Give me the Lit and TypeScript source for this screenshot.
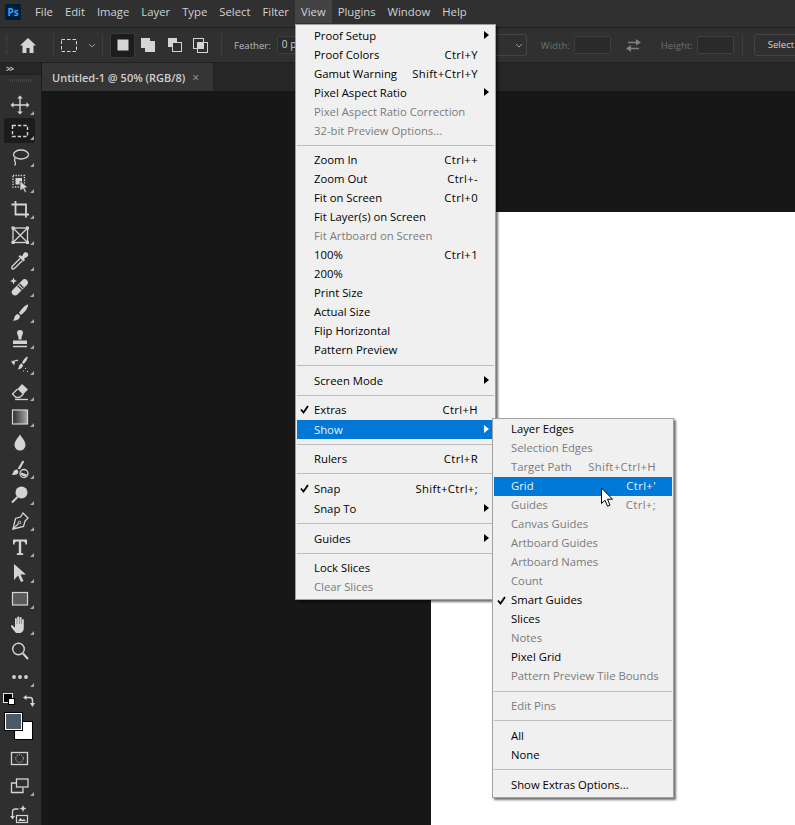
import { LitElement, html, css, svg } from "lit";
import { customElement } from "lit/decorators.js";

type Item = { l?: string; s?: string; a?: boolean; c?: boolean; d?: boolean; h?: boolean; sep?: number; gap?: number };

const I = (l: string, o: Partial<Item> = {}): Item => ({ l, ...o });
const S = (sep = 10): Item => ({ sep });

const viewMenu: Item[] = [
  I("Proof Setup", { a: true }), I("Proof Colors", { s: "Ctrl+Y" }), I("Gamut Warning", { s: "Shift+Ctrl+Y" }),
  I("Pixel Aspect Ratio", { a: true }), I("Pixel Aspect Ratio Correction", { d: true }), I("32-bit Preview Options...", { d: true }),
  S(),
  I("Zoom In", { s: "Ctrl++" }), I("Zoom Out", { s: "Ctrl+-" }), I("Fit on Screen", { s: "Ctrl+0" }), I("Fit Layer(s) on Screen"),
  I("Fit Artboard on Screen", { d: true }), I("100%", { s: "Ctrl+1" }), I("200%"), I("Print Size"), I("Actual Size"),
  I("Flip Horizontal"), I("Pattern Preview"),
  S(12),
  I("Screen Mode", { a: true }),
  S(),
  I("Extras", { c: true, s: "Ctrl+H" }), I("Show", { h: true, a: true, gap: 1 }),
  S(),
  I("Rulers", { s: "Ctrl+R" }),
  S(11),
  I("Snap", { c: true, s: "Shift+Ctrl+;" }), I("Snap To", { a: true, gap: 1 }),
  S(11),
  I("Guides", { a: true }),
  S(),
  I("Lock Slices"), I("Clear Slices", { d: true }),
];

const showMenu: Item[] = [
  I("Layer Edges"), I("Selection Edges", { d: true }), I("Target Path", { d: true, s: "Shift+Ctrl+H" }),
  I("Grid", { h: true, s: "Ctrl+'" }), I("Guides", { d: true, s: "Ctrl+;" }), I("Canvas Guides", { d: true }),
  I("Artboard Guides", { d: true }), I("Artboard Names", { d: true }), I("Count", { d: true }),
  I("Smart Guides", { c: true }), I("Slices"), I("Notes", { d: true }), I("Pixel Grid"),
  I("Pattern Preview Tile Bounds", { d: true }),
  S(),
  I("Edit Pins", { d: true }),
  S(11),
  I("All"), I("None"),
  S(11),
  I("Show Extras Options..."),
];

const menuNames = ["File", "Edit", "Image", "Layer", "Type", "Select", "Filter", "View", "Plugins", "Window", "Help"];

const tools: { i: unknown; t?: boolean; sel?: boolean }[] = [
  { t: true, i: svg`<path d="M10 2.500v15M2.500 10h15" stroke-width="1.400"/><path class="f" stroke="none" d="M10 .5l2.800 3h-5.600zM10 19.500l2.800-3h-5.600zM.5 10l3-2.800v5.600zM19.500 10l-3-2.800v5.600z"/>` },
  { t: true, sel: true, i: svg`<rect x="2.500" y="4.500" width="15" height="11" stroke-width="1.400" stroke-dasharray="3.400 2"/>` },
  { t: true, i: svg`<ellipse cx="11" cy="7.500" rx="7.500" ry="4.500" stroke-width="1.300"/><path d="M5 11c-1 2 0 3.500 .5 5.500c.2 1-.5 1.500-1 2" stroke-width="1.300"/>` },
  { t: true, i: svg`<rect x="3" y="2.500" width="11.500" height="11.500" stroke-width="1.300" stroke-dasharray="1.300 1.300"/><rect class="f" x="5.500" y="5" width="6.500" height="6.500" stroke="none"/><path class="f" d="M10 8l8 6.500-3.300.4 1.800 3.800-1.800.8-1.700-3.800-3 2.300z" stroke="#2f2f2f" stroke-width=".7"/>` },
  { t: true, i: svg`<path d="M1.500 5.500h14.500v13M5.500 2v13.500H19" stroke-width="1.800"/>` },
  { t: true, i: svg`<rect x="3" y="3" width="14.500" height="14.500" stroke-width="1.300"/><path d="M3 3l14.500 14.500M17.500 3L3 17.500" stroke-width="1.300"/><path class="f" d="M1.500 1.500h3v3h-3zM16 1.500h3v3h-3zM1.500 16h3v3h-3zM16 16h3v3h-3z" stroke="none"/>` },
  { t: true, i: svg`<path class="f" d="M12 5.500l1.500-3c1-1.500 3-1.500 4-.5s1 3-.5 4l-3 1.500 1 1.500-1.500 1.500-5-5 1.500-1.500z" stroke="none"/><path d="M10 7.500l-7 7c-1 1-1.500 2.500-1 3.200s2.200 0 3.200-1l7-7" stroke-width="1.300"/>` },
  { t: true, i: svg`<path class="f" d="M3 12.500l9-9c1.800-1.800 3.500-1.800 5-.3s1.500 3.200-.3 5l-9 9c-1.800 1.800-3.500 1.800-5 .3s-1.500-3.200 .3-5z" stroke="none"/><path class="k" d="M7.500 8.500l4.500 4.500M9.500 7l4 4" stroke-width="1.200"/><path class="f" d="M3.500 .5l1 2.500 2.500 1-2.500 1-1 2.500-1-2.500-2.500-1 2.500-1z" stroke="none"/>` },
  { t: true, i: svg`<path class="f" d="M18 1.500c.5 3-3 7.500-7 10.500l-2-2c2.500-4 6-8 9-8.500zM8 11l2 2c0 3-3 5-7.500 4.500c2-1 1.500-2 2-3.500s2-3 3.500-3z" stroke="none"/>` },
  { t: true, i: svg`<path class="f" d="M10 1c2 0 3 1.200 3 2.800c0 2-1.500 3-1.500 5.200v1.500h-3V9c0-2.200-1.500-3.200-1.500-5.200C7 2.200 8 1 10 1zM3 11.500h14v3.500H3z" stroke="none"/><path d="M3 17.500h14" stroke-width="1.500"/>` },
  { t: true, i: svg`<path class="f" d="M17.500 1.500c.8 2-2 6-4 7.500l-1.500-1.500c1.500-2.500 3.500-5.500 5.500-6zM11.500 8.500l1.500 1.500c-.2 2.500-2.500 4.500-5.500 4.200c1.500-.7 1-2 1.800-3.500c.4-1 1.200-2 2.200-2.200z" stroke="none"/><path d="M2 8c1.500-2 3.500-3 6-2.500" stroke-width="1.300"/><path class="f" d="M1 5.500l3 5 1.200-3.500zM15 13h1v1h-1zM13 15.500h1v1h-1zM17 16h1v1h-1z" stroke="none"/>` },
  { t: true, i: svg`<path class="f" d="M12 3l6 5.500-5 5-5.500-5.500z" stroke="none"/><path d="M7.500 8l-5 5 3.500 3.500h3.500l4-3.500" stroke-width="1.300"/><path d="M5 18.500h13" stroke-width="1.300"/>` },
  { t: true, i: svg`<defs><linearGradient id="g1"><stop offset="0" stop-color="#2c2c2c"/><stop offset="1" stop-color="#a8a8a8"/></linearGradient></defs><rect x="2.500" y="3" width="15" height="14" fill="url(#g1)" stroke-width="1.200"/>` },
  { i: svg`<path class="f" d="M10 1.500c2 3.500 5.500 6.500 5.500 10.500a5.500 5.500 0 0 1-11 0c0-4 3.500-7 5.500-10.500z" stroke="none"/>` },
  { t: true, i: svg`<path class="f" d="M12.500 1.500l1.800 1-4.500 8-2-1zM7 10.500c-.5 0-3 .5-3.500 2s-1 2.500-2 3c2 .7 5.500.7 6.500-1.500c.5-1 .5-2.500-1-3.500z" stroke="none"/><circle cx="14" cy="14.500" r="4" stroke-width="1.300"/><path class="f" d="M11 13.500l6 2-1 2.500-5-2z" stroke="none"/>` },
  { t: true, i: svg`<circle class="f" cx="11.500" cy="7.500" r="6" stroke="none"/><path d="M7.500 12L2 17.500" stroke-width="2"/>` },
  { t: true, i: svg`<path d="M13 2l5 5-3 3-1.500 5.500L3 18l2.500-10.500L10.500 6z" stroke-width="1.300"/><path d="M3 18l5.500-5.500" stroke-width="1.100"/><circle cx="9.500" cy="11.500" r="1.300" stroke-width="1"/>` },
  { t: true, i: svg`<path class="f" d="M3 2.500h14v5h-1.400c-.3-2-1-3-2.600-3h-1.800v11.500l2 .5V18H6.800v-1.500l2-.5V4.500H7c-1.600 0-2.300 1-2.600 3H3z" stroke="none"/>` },
  { t: true, i: svg`<path class="f" d="M4 1l12 10.500h-5.500l3 6.500-2.500 1-3-6.500L4 17z" stroke="none"/>` },
  { t: true, i: svg`<rect x="2.500" y="3.500" width="15" height="12.500" stroke-width="1.200" fill="#5a5a5a"/>` },
  { t: true, i: svg`<path class="f" d="M6 18c-1.500-2-4-4.500-5-6.500c-.4-1 1-1.700 2-.7l2 2V4c0-1.200 1.800-1.200 1.800 0v5h.4V2.500c0-1.300 2-1.300 2 0V9h.4V3c0-1.300 2-1.300 2 0v6h.4V5c0-1.200 1.800-1.200 1.800 0v8c0 2.500-1.500 5-4 5z" stroke="none"/>` },
  { i: svg`<circle cx="8.500" cy="8" r="5.800" stroke-width="1.400"/><path d="M13 12.500l5 5.500" stroke-width="2"/>` },
  { t: true, i: svg`<circle class="f" cx="4" cy="10" r="1.900" stroke="none"/><circle class="f" cx="10" cy="10" r="1.900" stroke="none"/><circle class="f" cx="16" cy="10" r="1.900" stroke="none"/>` },
];

@customElement("app-root")
export class AppRoot extends LitElement {
  static styles = css`
    :host { display: block; position: relative; width: 795px; height: 825px; overflow: hidden; background: #2b2b2b;
      font-family: "Open Sans", "Noto Sans", sans-serif; font-size: 11.3px; color: #cfcfcf; }
    svg { display: block; fill: none; stroke: #d4d4d4; }
    svg .f { fill: #d4d4d4; }
    svg .k { stroke: #2f2f2f; }

    .menubar { height: 28px; display: flex; align-items: stretch; background: #303030; box-sizing: border-box; border-bottom: 1px solid #1f1f1f; padding-left: 5px; }
    .ps { width: 16px; height: 16px; margin: 4px 8px 0 0; background: #001e36; border-radius: 2px; color: #31a8ff; font: 700 10px/16px "Open Sans", sans-serif; text-align: center; }
    .mi { padding: 3px 6px 0; height: 20px; line-height: 18px; color: #d2d2d2; font-size: 11.3px; }
    .mi.on { background: #434343; height: 20px; }

    .options { height: 35px; box-sizing: border-box; display: flex; align-items: center; background: #303030; border-bottom: 1px solid #1f1f1f; overflow: hidden; }
    .options > * { flex: none; }
    .grip { width: 3px; height: 20px; margin-left: 5px; background: repeating-linear-gradient(#3d3d3d 0 1px, transparent 1px 2px); }
    .home { margin-left: 12px; }
    .div { width: 1px; height: 22px; background: #3f3f3f; }
    .shape { width: 25px; height: 25px; border-radius: 2px; display: flex; align-items: center; justify-content: center; margin-right: 1px; }
    .shape.on { background: #1c1c1c; border: 1px solid #3a3a3a; box-sizing: border-box; }
    .lbl { color: #b9b9b9; font-size: 9.6px; }
    .lbl.dim { color: #6f6f6f; }
    .field { height: 18px; box-sizing: border-box; border: 1px solid #3f3f3f; background: #2a2a2a; border-radius: 2px; color: #cfcfcf; font-size: 10px; line-height: 15px; padding-left: 4px; }
    .stylebox { width: 31px; height: 22px; border: 1px solid #454545; border-left: 0; box-sizing: border-box; border-radius: 0 3px 3px 0; display: flex; align-items: center; justify-content: flex-end; padding-right: 3px; }
    .selectbtn { width: 50px; height: 22px; box-sizing: border-box; border: 1px solid #454545; border-radius: 3px; padding-left: 13px; line-height: 19px; color: #d2d2d2; font-size: 9.6px; white-space: nowrap; overflow: hidden; }
    .ml4 { margin-left: 4px; } .ml6 { margin-left: 6px; } .ml7 { margin-left: 7px; } .ml8 { margin-left: 8px; } .ml10 { margin-left: 10px; } .ml11 { margin-left: 11px; } .ml12 { margin-left: 12px; } .ml14 { margin-left: 14px; } .ml17 { margin-left: 17px; } .ml19 { margin-left: 19px; }
    .w60 { width: 60px; } .w37 { width: 37px; }
    .behind { width: 159px; }

    .work { display: flex; height: 762px; }
    .tools { width: 42px; flex: none; box-sizing: border-box; border-right: 1px solid #1c1c1c; background: #2f2f2f; display: flex; flex-direction: column; overflow: hidden; }
    .tools-head { height: 11px; background: #262626; border-bottom: 1px solid #1f1f1f; color: #c4c4c4; font-size: 8px; line-height: 11px; padding-left: 6px; letter-spacing: -1px; flex: none; font-weight: 700; }
    .tools-grip { height: 3px; margin: 4px 10px 0; background: repeating-linear-gradient(90deg, #444 0 1px, transparent 1px 2px); flex: none; }
    .tools-list { display: flex; flex-direction: column; padding-top: 10px; }
    .tool { position: relative; width: 31px; height: 26px; margin-left: 4px; display: flex; align-items: center; justify-content: center; box-sizing: border-box; flex: none; }
    .tool.sel { background: #1c1c1c; border-radius: 2px; height: 25px; margin-bottom: 1px; }
    .tool.t::after { content: ""; position: absolute; right: 1px; bottom: 3px; border-left: 4px solid transparent; border-bottom: 4px solid #a8a8a8; }
    .colors { position: relative; height: 55px; flex: none; }
    .mini-b { position: absolute; left: 3px; top: 3px; width: 8px; height: 8px; background: #000; border: 1px solid #e5e5e5; }
    .mini-w { position: absolute; left: 8px; top: 8px; width: 5px; height: 5px; background: #fff; border: 1px solid #000; }
    .swap { position: absolute; left: 23px; top: 5px; }
    .bg { position: absolute; left: 14px; top: 31px; width: 17px; height: 17px; background: #fff; border: 1px solid #000; }
    .fg { position: absolute; left: 5px; top: 23px; width: 15px; height: 15px; background: #4b5a66; border: 1px solid #fff; outline: 1px solid #000; }
    .tool.b { height: 27px; }
    .tool.last { margin-top: 1px; }

    .doc { flex: 1; display: flex; flex-direction: column; min-width: 0; }
    .tabs { height: 28px; flex: none; background: #262626; display: flex; box-sizing: border-box; }
    .tab { width: 171px; background: #353535; display: flex; align-items: center; padding-left: 10px; box-sizing: border-box; font-weight: 600; font-size: 11px; color: #d0d0d0; gap: 7px; white-space: nowrap; }
    .close { color: #9a9a9a; font-size: 12px; font-weight: 400; }
    .canvas { flex: 1; background: #171717; padding: 121px 0 0 389px; display: flex; }
    .paper { flex: 1; background: #fff; }

    .menu { position: absolute; background: #f0f0f0; border: 1px solid #a0a0a0; box-sizing: border-box; box-shadow: 2px 2px 2px rgba(0,0,0,.55); color: #000; font-size: 11.3px; padding: 1px 1px 2px; }
    .main { left: 295px; top: 24px; width: 201px; height: 576px; }
    .sub { left: 492px; top: 418px; width: 182px; height: 380px; }
    .row { position: relative; height: 19px; line-height: 20px; padding: 0 16px 0 17px; display: flex; justify-content: space-between; white-space: nowrap; }
    .sub .row:nth-child(-n+14) { line-height: 18px; }
    .row.d { color: #7b7b7b; }
    .row.h { background: #0078d7; color: #eaf3fb; }
    .key { letter-spacing: .35px; }
    .check { position: absolute; left: 3px; top: 5px; }
    .check path { stroke: #000; stroke-width: 1.8; }
    .arrow { position: absolute; right: 5px; top: 5px; width: 0; height: 0; border-left: 5px solid #000; border-top: 4px solid transparent; border-bottom: 4px solid transparent; }
    .row.h .arrow { border-left-color: #fff; }
    .sep { display: flex; align-items: center; }
    .sep i { display: block; height: 1px; width: 100%; background: #bdbdbd; }
    .cursor { position: absolute; left: 600px; top: 487px; }
    .cursor path { fill: #fff; stroke: #000; stroke-width: 1; }
  `;

  private rows(items: Item[]) {
    return items.map((it) => {
      if (it.sep) return html`<div class="sep" style="height:${it.sep}px"><i></i></div>`;
      const cls = `row${it.d ? " d" : ""}${it.h ? " h" : ""}`;
      return html`<div class=${cls} style=${it.gap ? `margin-top:${it.gap}px` : ""}>
        ${it.c ? html`<svg class="check" width="9" height="9" viewBox="0 0 9 9"><path d="M1 4.500l2.500 3L8 1"/></svg>` : ""}
        <span>${it.l}</span>${it.s ? html`<span class="key">${it.s}</span>` : ""}
        ${it.a ? html`<span class="arrow"></span>` : ""}
      </div>`;
    });
  }

  private chev() {
    return html`<svg width="8" height="5" viewBox="0 0 8 5"><path d="M1 1l3 3 3-3" stroke="#9a9a9a"/></svg>`;
  }

  private options() {
    return html`<div class="options">
      <div class="grip"></div>
      <svg class="home" width="16" height="15" viewBox="0 0 16 15"><path class="f" stroke="none" d="M8 0L0 7.500h2.500V15h4v-5h3v5h4V7.500H16z"/></svg>
      <div class="div ml17"></div>
      <svg class="ml7" width="17" height="13" viewBox="0 0 17 13"><rect x=".5" y=".5" width="15" height="12" stroke-dasharray="3.500 2"/></svg>
      <span class="ml10">${this.chev()}</span>
      <div class="div ml6"></div>
      <div class="shape on ml7"><svg width="12" height="12" viewBox="0 0 12 12"><rect class="f" stroke="none" width="11" height="11" x=".5" y=".5"/></svg></div>
      <div class="shape"><svg width="15" height="15" viewBox="0 0 15 15"><path class="f" stroke="none" d="M0 0h9v3h5v11H4v-4H0z"/></svg></div>
      <div class="shape"><svg width="14" height="14" viewBox="0 0 14 14"><rect class="f" stroke="none" width="9" height="9"/><rect x="4.500" y="4.500" width="9" height="9" fill="#303030"/></svg></div>
      <div class="shape"><svg width="15" height="15" viewBox="0 0 15 15"><rect x=".5" y=".5" width="10" height="10"/><rect x="4.500" y="4.500" width="10" height="10"/><rect class="f" stroke="none" x="4.500" y="4.500" width="6" height="6"/></svg></div>
      <div class="div ml7"></div>
      <span class="lbl ml12">Feather:</span>
      <div class="field ml6 w60">0 px</div>
      <div class="behind"></div>
      <div class="stylebox">${this.chev()}</div>
      <span class="lbl dim ml14">Width:</span>
      <div class="field ml4 w37"></div>
      <svg class="ml14" width="17" height="13" viewBox="0 0 17 13"><path stroke="#7f7f7f" stroke-width="1.500" d="M3 3.500h10M14 9.500H4"/><path fill="#7f7f7f" stroke="none" d="M11 0l5 3.500-5 3zM6 6l-5 3.500 5 3.500z"/></svg>
      <span class="lbl dim ml19">Height:</span>
      <div class="field ml4 w37"></div>
      <div class="div ml8"></div>
      <div class="selectbtn ml11">Select</div>
    </div>`;
  }

  render() {
    return html`
      <div class="menubar">
        <div class="ps">Ps</div>
        ${menuNames.map((m) => html`<div class="mi ${m === "View" ? "on" : ""}">${m}</div>`)}
      </div>
      ${this.options()}
      <div class="work">
        <div class="tools">
          <div class="tools-head">&gt;&gt;</div>
          <div class="tools-grip"></div>
          <div class="tools-list">
            ${tools.map((t) => html`<div class="tool ${t.t ? "t" : ""} ${t.sel ? "sel" : ""}"><svg width="20" height="20" viewBox="0 0 20 20">${t.i}</svg></div>`)}
            <div class="colors">
              <div class="mini-b"></div><div class="mini-w"></div>
              <svg class="swap" width="12" height="12" viewBox="0 0 12 12"><path d="M2.500 2.500H7c2 0 2.500 1 2.500 3V9" stroke-width="1.500"/><path class="f" stroke="none" d="M3.500 0v5L0 2.500zM7 8h5l-2.500 4z"/></svg>
              <div class="bg"></div><div class="fg"></div>
            </div>
            <div class="tool b"><svg width="20" height="16" viewBox="0 0 20 16"><rect x="1.500" y="1.500" width="16" height="12" stroke-width="1.300"/><circle cx="9.500" cy="7.500" r="3.800" stroke-dasharray="1.200 1.200"/></svg></div>
            <div class="tool t b"><svg width="20" height="16" viewBox="0 0 20 16"><rect x="6.500" y="1" width="11.500" height="8" stroke-width="1.300"/><path d="M6 5H1.500v9.500H13V9.500" stroke-width="1.300"/></svg></div>
            <div class="tool b last"><svg width="20" height="20" viewBox="0 0 20 20"><path d="M2.500 15V8c0-2 1-3 3-3h3" stroke-width="1.300"/><path class="f" stroke="none" d="M0 12h5l-2.500 3zM13 1l1 2.500 2.500 1-2.500 1-1 2.500-1-2.500-2.500-1 2.500-1z"/><rect x="6.500" y="11.500" width="11" height="7" stroke-width="1.200"/><path class="f" stroke="none" d="M8 17l2.500-3 2 2 1.500-1 2 2z"/></svg></div>
          </div>
        </div>
        <div class="doc">
          <div class="tabs"><div class="tab">Untitled-1 @ 50% (RGB/8) <span class="close">×</span></div></div>
          <div class="canvas"><div class="paper"></div></div>
        </div>
      </div>
      <div class="menu main">${this.rows(viewMenu)}</div>
      <div class="menu sub">${this.rows(showMenu)}</div>
      <svg class="cursor" width="14" height="21" viewBox="0 0 14 21"><path d="M1.500 1v15.500l3.500-3.300 2.500 6 2.500-1-2.500-6h5z"/></svg>
    `;
  }
}
